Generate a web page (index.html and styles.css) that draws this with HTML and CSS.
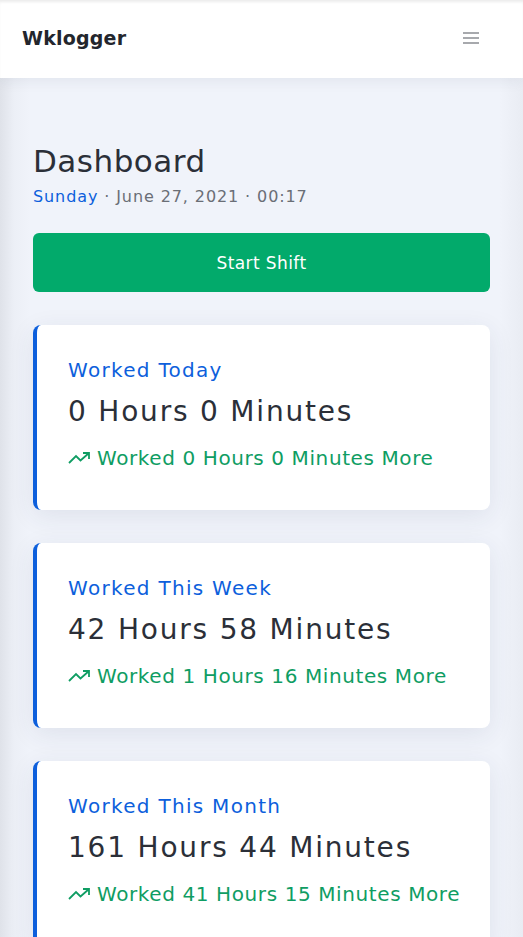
FILE: index.html
```html
<!DOCTYPE html>
<html lang="en">
<head>
<meta charset="utf-8">
<title>Wklogger</title>
<link rel="stylesheet" href="styles.css">
</head>
<body>
<header class="topbar">
  <div class="brand">Wklogger</div>
  <button class="menu" aria-label="Menu">
    <svg width="18" height="14" viewBox="0 0 18 14"><path d="M1 2h16M1 7h16M1 12h16" stroke="#8a8d93" stroke-width="1.6" fill="none"/></svg>
  </button>
</header>
<main class="content">
  <section class="heading">
    <h1 class="title">Dashboard</h1>
    <p class="date"><span class="day">Sunday</span> · June 27, 2021 · 00:17</p>
  </section>
  <button class="start">Start Shift</button>
  <div class="cards">
    <article class="card">
      <div class="label">Worked Today</div>
      <div class="value">0 Hours 0 Minutes</div>
      <div class="delta"><svg class="trend" width="24" height="14" viewBox="0 0 24 14"><path d="M1 12l7-7 4.5 4.5L21 2M15 2h6v6" stroke="#0f9d63" stroke-width="1.8" fill="none" stroke-linejoin="miter"/></svg>Worked 0 Hours 0 Minutes More</div>
    </article>
    <article class="card">
      <div class="label">Worked This Week</div>
      <div class="value">42 Hours 58 Minutes</div>
      <div class="delta"><svg class="trend" width="24" height="14" viewBox="0 0 24 14"><path d="M1 12l7-7 4.5 4.5L21 2M15 2h6v6" stroke="#0f9d63" stroke-width="1.8" fill="none"/></svg>Worked 1 Hours 16 Minutes More</div>
    </article>
    <article class="card">
      <div class="label">Worked This Month</div>
      <div class="value">161 Hours 44 Minutes</div>
      <div class="delta"><svg class="trend" width="24" height="14" viewBox="0 0 24 14"><path d="M1 12l7-7 4.5 4.5L21 2M15 2h6v6" stroke="#0f9d63" stroke-width="1.8" fill="none"/></svg>Worked 41 Hours 15 Minutes More</div>
    </article>
  </div>
</main>
</body>
</html>
```
FILE: styles.css
```css
* { box-sizing: border-box; }
html, body { margin: 0; padding: 0; }
body {
  font-family: "DejaVu Sans", "Open Sans", sans-serif;
  background: linear-gradient(90deg, #dfe2e9 0px, #eceff6 14px, #f0f3fa 30px, #f0f3fa 500px, #e9ecf3 523px);
  color: #2b2f38;
  min-height: 937px;
}
.topbar {
  height: 78px;
  background: #fff;
  display: flex;
  align-items: center;
  justify-content: space-between;
  padding: 0 22px;
  box-shadow: 0 2px 14px rgba(40, 50, 80, 0.08), inset 0 3px 3px -1px rgba(0,0,0,0.08);
  position: relative;
}
.brand {
  font-weight: 700;
  font-size: 19px;
  color: #23262d;
  margin-top: -3px;
  letter-spacing: 0.2px;
}
.menu {
  border: none;
  background: none;
  padding: 0;
  margin-right: 21px;
  margin-top: -2px;
  display: flex;
}
.content {
  padding: 65px 33px 0;
}
.title {
  margin: 0;
  font-size: 31px;
  font-weight: 400;
  line-height: 36px;
  color: #2b2f38;
  letter-spacing: 0.5px;
}
.date {
  margin: 6px 0 0;
  font-size: 16px;
  line-height: 24px;
  color: #6a6e76;
  letter-spacing: 0.9px;
}
.day { color: #0d5fdc; }
.start {
  display: block;
  width: 100%;
  margin-top: 24px;
  height: 59px;
  border: none;
  border-radius: 6px;
  background: #02aa6b;
  color: #fff;
  font-family: inherit;
  font-size: 17px;
  letter-spacing: 0.4px;
}
.cards {
  margin-top: 33px;
  display: flex;
  flex-direction: column;
  gap: 33px;
}
.card {
  background: #fff;
  border-left: 4px solid #0d5fdc;
  border-radius: 8px;
  height: 185px;
  padding: 32px 20px 0 31px;
  box-shadow: 0 6px 26px rgba(40, 55, 90, 0.09);
}
.label {
  color: #0d5fdc;
  font-size: 20px;
  line-height: 26px;
  letter-spacing: 1.3px;
}
.value {
  margin-top: 10px;
  font-size: 28px;
  line-height: 38px;
  color: #2b2f38;
  letter-spacing: 1.8px;
}
.delta {
  margin-top: 14px;
  font-size: 20px;
  line-height: 26px;
  color: #0f9d63;
  display: flex;
  align-items: center;
  letter-spacing: 0.6px;
}
.trend { margin-right: 5px; flex: none; }
```
